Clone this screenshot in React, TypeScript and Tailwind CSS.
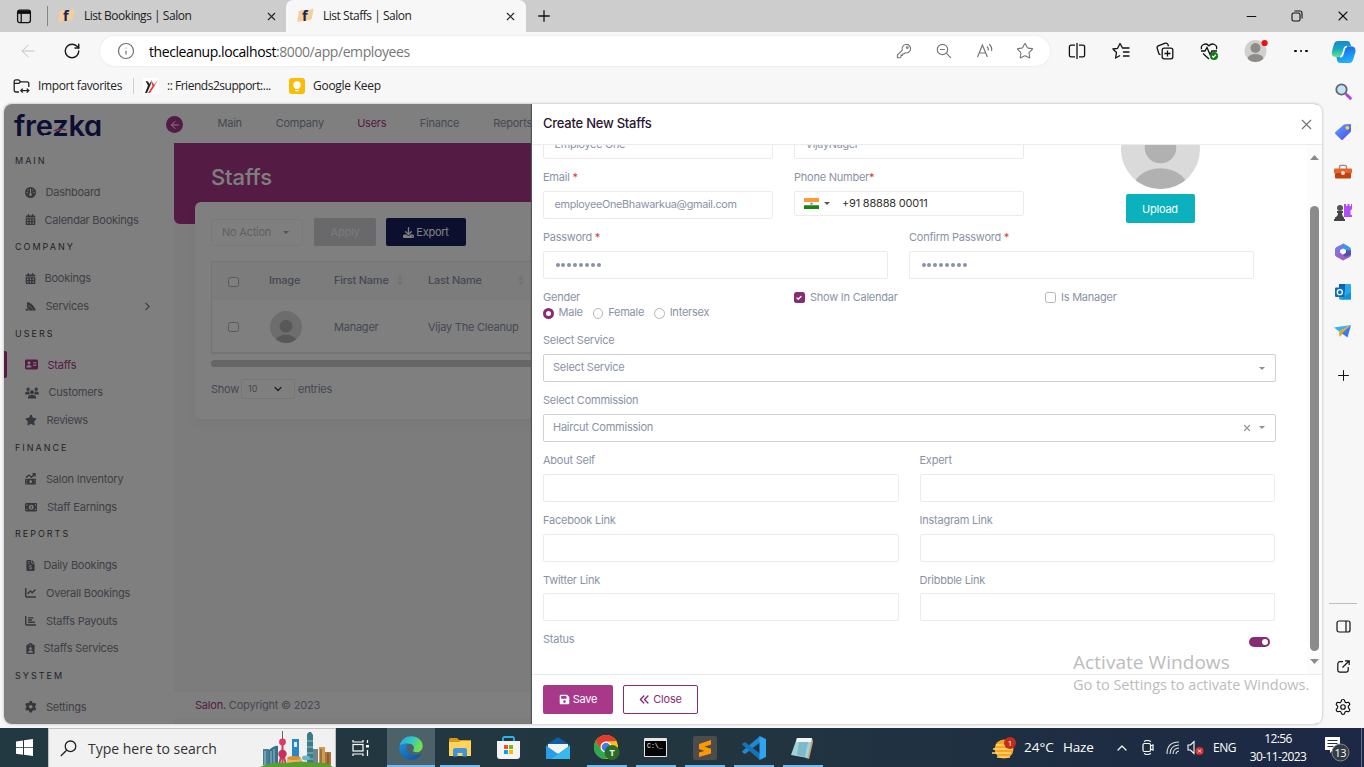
import React from "react";
import {
  FaGauge, FaCalendarDays, FaAddressCard, FaUsers, FaStar, FaMoneyBillTrendUp, FaMoneyBill1,
  FaFileInvoiceDollar, FaChartLine, FaChartBar, FaClipboardUser, FaGear, FaDownload,
  FaFloppyDisk, FaAnglesLeft,
} from "react-icons/fa6";
import {
  X, Plus, ArrowLeft, RotateCw, Info, Star, ChevronRight, ChevronDown, ChevronUp, Settings,
  SquareArrowOutUpRight, Minus, Check,
} from "lucide-react";

const ui = "font-['Open_Sans','Noto_Sans',sans-serif]";

/* ---------- browser chrome ---------- */

function Favicon() {
  return (
    <svg width="17" height="16" viewBox="0 0 17 16" className="shrink-0 overflow-visible">
      <path d="M1.500 3.500C6 0 9 5 16 .5c1 4-1 6-1 10-4 4-8 0-14 4C-.5 10 2.500 8 1.500 3.500Z" fill="#f5cf9b" />
      <text x="5" y="13" fontSize="14.500" fontWeight="700" fill="#1b1f5c" fontFamily="Open Sans, sans-serif">f</text>
    </svg>
  );
}

function TabBar() {
  return (
    <div className="flex h-8 shrink-0 bg-[#cdcdcd]">
      <div className="flex w-[47px] items-center justify-center">
        <svg width="16" height="15" viewBox="0 0 16 15" fill="none" stroke="#111" strokeWidth="1.3">
          <rect x="1.6" y="1.2" width="12.8" height="12.4" rx="2" />
          <path d="M2 3.2h12" strokeWidth="3.4" />
          <path d="M5.2 4v9" />
        </svg>
      </div>
      <div className="flex w-[239px] items-center pr-[8px]">
        <div className="mr-[10px] h-[20px] w-px bg-[#858585]" />
        <Favicon />
        <span className="ml-[9px] flex-1 text-[12px] tracking-[-0.47px] text-[#222]">List Bookings | Salon</span>
        <X size={13} strokeWidth={2} color="#222" />
      </div>
      <div className="flex w-[240px] items-center rounded-t-[7px] bg-[#f7f7f7] pl-[11px] pr-[9px]">
        <Favicon />
        <span className="ml-[9px] flex-1 text-[12px] tracking-[-0.47px] text-[#222]">List Staffs | Salon</span>
        <X size={13} strokeWidth={2} color="#222" />
      </div>
      <div className="flex w-[35px] items-center justify-center">
        <Plus size={18} strokeWidth={1.7} color="#111" />
      </div>
      <div className="flex-1" />
      <div className="flex w-[134px] items-center">
        <div className="flex w-[42px] justify-center"><Minus size={15} strokeWidth={1.6} color="#111" /></div>
        <div className="flex w-[50px] justify-center">
          <svg width="12" height="12" viewBox="0 0 12 12" fill="none" stroke="#111" strokeWidth="1.1">
            <rect x="1" y="3" width="8" height="8" rx="1.5" />
            <path d="M3.5 1H9a2 2 0 0 1 2 2v5.5" />
          </svg>
        </div>
        <div className="flex w-[42px] justify-center"><X size={16} strokeWidth={1.6} color="#111" /></div>
      </div>
    </div>
  );
}

function Toolbar() {
  return (
    <div className="flex h-[38px] shrink-0 items-center">
      <div className="flex w-[56px] justify-center"><ArrowLeft size={20} strokeWidth={1.2} color="#c3c3c3" /></div>
      <div className="flex w-[32px] justify-center"><RotateCw size={18} strokeWidth={1.9} color="#1b1b1b" /></div>
      <div className="ml-[12px] flex h-[30px] w-[950px] items-center rounded-full bg-white pl-[17px] shadow-[0_0_3px_rgba(0,0,0,0.08)]">
        <Info size={18} strokeWidth={1.6} color="#707070" />
        <span className="ml-[14px] text-[14px] tracking-[-0.42px] text-[#777]">
          <span className="text-black">thecleanup.localhost</span>:8000/app/employees
        </span>
        <div className="flex-1" />
        <svg width="16" height="16" viewBox="0 0 16 16" fill="none" stroke="#777" strokeWidth="1.1" className="mr-[24px]">
          <path d="M6.3 7.2A4.3 4.3 0 1 1 9 9.8L7.8 11H6.4v1.4H5v1.4l-1 1H1.4v-2.7Z" />
          <circle cx="11.3" cy="4.6" r="0.9" />
        </svg>
        <svg width="16" height="16" viewBox="0 0 16 16" fill="none" stroke="#777" strokeWidth="1.2" className="mr-[24px]">
          <circle cx="6.5" cy="6.5" r="5.2" /><path d="M4 6.5h5M10.4 10.4l4.5 4.5" />
        </svg>
        <svg width="18" height="16" viewBox="0 0 18 16" fill="none" stroke="#777" strokeWidth="1.2" className="mr-[22px]">
          <path d="M1.5 14 6.4 2l5 12M3.2 10h6.4M11 3.5q1.7 1.5 1.3 4M13.3 1.3q3.2 3 2.2 6.7" />
        </svg>
        <Star size={18} strokeWidth={1.5} color="#777" className="mr-[16px]" />
      </div>
      <div className="flex flex-1 items-center">
        <div className="flex w-[45px] justify-center pl-[8px]">
          <svg width="18" height="18" viewBox="0 0 18 18" fill="none" stroke="#111" strokeWidth="1.3">
            <path d="M7 3.2H3a1.6 1.6 0 0 0-1.6 1.6v8.4A1.6 1.6 0 0 0 3 14.8h4M11 3.2h4a1.6 1.6 0 0 1 1.6 1.6v8.4a1.6 1.6 0 0 1-1.6 1.6h-4M9 1v16" />
          </svg>
        </div>
        <div className="flex w-[45px] justify-center pl-[7px]">
          <svg width="18" height="18" viewBox="0 0 18 18" fill="none" stroke="#111" strokeWidth="1.3" strokeLinejoin="round">
            <path d="M10.5 6 8 1.5 5.6 6.3.9 7l3.6 3.5L3.6 16l4.5-2.5M10 6h7.5M11 10h6.5M11 14h6.5" />
          </svg>
        </div>
        <div className="flex w-[44px] justify-center pl-[6px]">
          <svg width="18" height="18" viewBox="0 0 18 18" fill="none" stroke="#111" strokeWidth="1.3">
            <rect x="6.2" y="6.2" width="10.6" height="10.6" rx="2" />
            <path d="M11.5 8.5v6M8.5 11.5h6M4.5 12.6 3 12 1.2 6.2a2 2 0 0 1 1-2.4L9.4 1.2a2 2 0 0 1 2.4 1l.7 2" />
          </svg>
        </div>
        <div className="flex w-[44px] justify-center pl-[6px]">
          <svg width="18" height="18" viewBox="0 0 18 18" fill="none" stroke="#111" strokeWidth="1.3">
            <path d="M1.6 7.2C0 3 6 0 9 3.8 12 0 18 3 16.4 7.2M1 9h4l2-3.5 3 7L12 9h5M3 11.5 9 17" />
            <circle cx="14" cy="14" r="4" fill="#107c10" stroke="none" />
            <path d="m12.200 14 1.300 1.300 2.400-2.500" stroke="#fff" />
          </svg>
        </div>
        <div className="flex w-[48px] justify-center pl-[8px]">
          <svg width="24" height="24" viewBox="0 0 24 24">
            <clipPath id="prof"><circle cx="11.5" cy="12" r="11" /></clipPath>
            <g clipPath="url(#prof)">
              <rect width="24" height="24" fill="#d2d0ce" />
              <circle cx="11.5" cy="9" r="5" fill="#8e8c8a" />
              <ellipse cx="11.5" cy="20" rx="8" ry="5" fill="#8e8c8a" />
            </g>
            <circle cx="20.6" cy="4" r="3.1" fill="#e11" />
          </svg>
        </div>
        <div className="flex w-[42px] items-center justify-center gap-[3px] pl-[8px]">
          <span className="size-[2.600px] rounded-full bg-black" />
          <span className="size-[2.600px] rounded-full bg-black" />
          <span className="size-[2.600px] rounded-full bg-black" />
        </div>
      </div>
    </div>
  );
}

function Favorites() {
  return (
    <div className="flex h-[34px] shrink-0 items-center pb-[2px] pl-[13px] text-[12px] text-[#222]">
      <svg width="17" height="16" viewBox="0 0 17 16" fill="none" stroke="#222" strokeWidth="1.3">
        <path d="M6 14H3a1.8 1.8 0 0 1-1.8-1.8V3.6A1.8 1.8 0 0 1 3 1.8h2.6l2 2H14a1.8 1.8 0 0 1 1.8 1.8V9M1.2 5.4h4.6l1.8-1.6M8 12.6h7.6M9.8 10.6 7.8 12.6l2 2M13.8 10.6l2 2-2 2" />
      </svg>
      <span className="ml-[8px] w-[95px] tracking-[-0.37px] whitespace-nowrap">Import favorites</span>
      <div className="h-[16px] w-px bg-[#cfcfcf]" />
      <svg width="16" height="16" viewBox="0 0 16 16" className="ml-[9px] bg-white">
        <path d="M2.500 3 5 3.500 6.500 6 9 1.500 7.500 7 4 15H2L5 7.500Z" fill="#222" />
        <path d="M8 4l2 .5L11 7l4-5.500L11.500 8 7 15H5L9.500 8Z" fill="#e33" />
      </svg>
      <span className="ml-[8px] w-[122px] tracking-[-0.48px] whitespace-nowrap">:: Friends2support:...</span>
      <div className="flex size-[16px] items-center justify-center rounded-[3px] bg-[#fbbc04]">
        <svg width="8" height="11" viewBox="0 0 8 11" fill="#fff"><circle cx="4" cy="4" r="3.7" /><path d="M2 6h4v2H2zM2.200 9h3.600v1.300H2.200z" /></svg>
      </div>
      <span className="ml-[8px] tracking-[-0.27px]">Google Keep</span>
    </div>
  );
}

function EdgeSidebar() {
  return (
    <div className="flex w-[42px] shrink-0 flex-col items-center">
      <div className="flex h-[39px] items-center">
        <svg width="25" height="24" viewBox="0 0 25 24">
          <defs>
            <linearGradient id="cpa" x1="0" y1="0" x2="0" y2="1"><stop offset="0" stopColor="#1688d8" /><stop offset="0.500" stopColor="#17a8c0" /><stop offset="1" stopColor="#6ee08a" /></linearGradient>
            <linearGradient id="cpb" x1="0" y1="0" x2="0.300" y2="1"><stop offset="0" stopColor="#1a5fd8" /><stop offset="1" stopColor="#1cb0ff" /></linearGradient>
          </defs>
          <path d="M7 1h9c2 0 3 1 3.300 3l1 2.500h-4c-1.300 0-2 .5-2.500 2L11.500 15c-.5 1.500-1 2-2.500 2H5C1 17 .5 14 1 11l2-7c.6-2 2-3 4-3Z" fill="url(#cpa)" />
          <path d="M18 23H9c-1.500 0-2.500-1-3-3l-.5-3H9c1.500 0 2-.5 2.500-2l2.300-6.500c.5-1.500 1.200-2 2.500-2H21c3 0 4 3 3.300 6L22 20c-.7 2-2 3-4 3Z" fill="url(#cpb)" />
          <path d="M16 6.500q-2 .3-2.500 2l-2 6.500q-.4 1.800-2.500 2" stroke="#eefcff" strokeWidth="1.700" fill="none" />
        </svg>
      </div>
      <div className="flex h-[40px] items-center">
        <svg width="17" height="17" viewBox="0 0 17 17"><circle cx="6.500" cy="6.500" r="5.200" fill="#bfe3fb" stroke="#666" strokeWidth="1.800" /><path d="m10.600 10.600 1.800 1.800" stroke="#666" strokeWidth="2" /><path d="m12 12 3.300 3.300" stroke="#b43df0" strokeWidth="3" strokeLinecap="round" /></svg>
      </div>
      <div className="flex h-[41px] items-center">
        <svg width="18" height="18" viewBox="0 0 18 18"><defs><linearGradient id="tg" x1="0" y1="0" x2="1" y2="1"><stop offset="0" stopColor="#5aa8ff" /><stop offset="1" stopColor="#4f46e5" /></linearGradient></defs><path d="M10 1.500 16 1q1 0 1 1v6.500L9 16.600q-1 1-2 0L1.400 11q-1-1 0-2Z" fill="url(#tg)" /><circle cx="13.300" cy="4.800" r="1.900" fill="#ffd43b" /></svg>
      </div>
      <div className="flex h-[40px] items-center">
        <svg width="20" height="16" viewBox="0 0 20 16"><path d="M6.500 5V3q0-1.700 1.700-1.700h3.600Q13.500 1.300 13.500 3v2" fill="none" stroke="#8b8b8b" strokeWidth="1.300" /><rect x="1" y="4.500" width="18" height="5" rx="1" fill="#e8622a" /><rect x="2" y="9" width="16" height="5.600" rx="1" fill="#c2410c" /><circle cx="10" cy="9" r="2" fill="#ddd" /></svg>
      </div>
      <div className="flex h-[40px] items-center">
        <svg width="20" height="20" viewBox="0 0 20 20"><path d="M11 2h2v2h1.500V2h2v2H18V2h1v5l-1.500 1.500V13H19v2h-8Z" fill="#b04df5" /><circle cx="7" cy="6" r="3" fill="#555" /><path d="M4 9h6v2H9q0 3 2 4.500V17h1v2H1v-2h1v-1.500Q5 14 5 11H4Z" fill="#444" /></svg>
      </div>
      <div className="flex h-[40px] items-center">
        <svg width="18" height="18" viewBox="0 0 18 18">
          <path d="M9.500.500 2.500 4Q1 5 1 6.500v6L6 10V7l5-2.500Z" fill="#7f74ea" />
          <path d="M9.500.500 15.500 4Q17 5 17 6.500V12l-5-2V7L7.500 4.500Z" fill="#3a97ea" />
          <path d="m17 9.500-.2 3q-.2 1-1.300 1.700L9 17.600l-7-4L1 12l5-2.500 3 2.200 3-2Z" fill="#9a62c4" />
          <path d="M17 8v4l-5.500 2-2.500-2 3-2V7Z" fill="#564fa8" />
        </svg>
      </div>
      <div className="flex h-[40px] items-center">
        <svg width="18" height="18" viewBox="0 0 18 18"><rect x="5" y="1" width="12" height="15.500" rx="1" fill="#28a8ea" /><path d="M5 1h6v8H5z" fill="#0a64ad" /><path d="M17 9v7.500H6Z" fill="#1490df" /><rect x="1" y="4.500" width="9.500" height="9.500" rx="1" fill="#0f6cbd" /><circle cx="5.800" cy="9.200" r="2.500" fill="none" stroke="#fff" strokeWidth="1.300" /></svg>
      </div>
      <div className="flex h-[40px] items-center">
        <svg width="18" height="16" viewBox="0 0 18 16"><path d="M17 1 0 3.500l5 4Z" fill="#35b4f2" /><path d="M17 1 5 7.500 5.500 13l3-3Z" fill="#f0a020" /><path d="M17 1 8 9.500l5.500 4Z" fill="#2f7df6" /></svg>
      </div>
      <div className="flex h-[46px] items-center"><Plus size={17} strokeWidth={1.4} color="#111" /></div>
      <div className="flex-1" />
      <div className="h-px w-[28px] bg-[#bdbdbd]" />
      <div className="flex h-[44px] items-center">
        <svg width="15" height="13" viewBox="0 0 15 13" fill="none" stroke="#111" strokeWidth="1.200"><rect x="1" y="1" width="13" height="11" rx="2" /><path d="M10 1v11" /></svg>
      </div>
      <div className="flex h-[37px] items-center">
        <svg width="13" height="13" viewBox="0 0 13 13" fill="none" stroke="#111" strokeWidth="1.200"><path d="M6 1.700H3A2.200 2.200 0 0 0 .8 4v6A2.200 2.200 0 0 0 3 12.200h6A2.200 2.200 0 0 0 11.200 10V7M8 .8h4.200V5M12 1 5.500 7.500" /></svg>
      </div>
      <div className="flex h-[43px] items-center"><Settings size={18} strokeWidth={1.600} color="#111" /></div>
    </div>
  );
}

/* ---------- salon application ---------- */

function WedgeIcon() {
  return (
    <svg width="11" height="10" viewBox="0 0 11 10" fill="currentColor">
      <path d="M2 1q5 .5 8.500 7v1.500H.5V8.200L2 7.500Z" />
      <path d="M3 4.500q3 .7 5 4M1 6.500q2.500.3 3.500 3" stroke="#fff" strokeWidth=".6" fill="none" />
    </svg>
  );
}

type Item = { icon: React.ReactNode; label: string; gap: string; active?: boolean; more?: boolean };
const sections: { title: string; items: Item[] }[] = [
  { title: "MAIN", items: [
    { icon: <FaGauge size={11} />, label: "Dashboard", gap: "ml-[10px]" },
    { icon: <FaCalendarDays size={11} />, label: "Calendar Bookings", gap: "ml-[9px]" }] },
  { title: "COMPANY", items: [
    { icon: <FaCalendarDays size={11} />, label: "Bookings", gap: "ml-[9px]" },
    { icon: <WedgeIcon />, label: "Services", gap: "ml-[10px]", more: true }] },
  { title: "USERS", items: [
    { icon: <FaAddressCard size={13} />, label: "Staffs", gap: "ml-[10px]", active: true },
    { icon: <FaUsers size={14} />, label: "Customers", gap: "ml-[10px]" },
    { icon: <FaStar size={12} />, label: "Reviews", gap: "ml-[10px]" }] },
  { title: "FINANCE", items: [
    { icon: <FaMoneyBillTrendUp size={11.5} />, label: "Salon Inventory", gap: "ml-[10px]" },
    { icon: <FaMoneyBill1 size={12.5} />, label: "Staff Earnings", gap: "ml-[10px]" }] },
  { title: "REPORTS", items: [
    { icon: <FaFileInvoiceDollar size={11} />, label: "Daily Bookings", gap: "ml-[8px]" },
    { icon: <FaChartLine size={11.5} />, label: "Overall Bookings", gap: "ml-[10px]" },
    { icon: <FaChartBar size={11.5} />, label: "Staffs Payouts", gap: "ml-[10px]" },
    { icon: <FaClipboardUser size={11} />, label: "Staffs Services", gap: "ml-[8px]" }] },
  { title: "SYSTEM", items: [{ icon: <FaGear size={11.5} />, label: "Settings", gap: "ml-[10px]" }] },
];

function Logo() {
  return (
    <svg width="89" height="26" viewBox="0 0 89 26" className="overflow-visible">
      <text x="0" y="22.500" className="font-['Inter',sans-serif] font-semibold [font-feature-settings:'cv11']" fontSize="28" textLength="88" lengthAdjust="spacingAndGlyphs" fill="#181f66">frezka</text>
      <path d="M30 22.500q5 1 9-2t7-4 7 2" fill="none" stroke="#fff" strokeWidth="1" />
      <path d="M40 18q5-3.500 12-1" fill="none" stroke="#d04a8b" strokeWidth="1.400" />
    </svg>
  );
}

function AppSidebar() {
  return (
    <div className="flex w-[170px] shrink-0 flex-col bg-white text-[11px] tracking-[-0.23px] text-[#7c828c]">
      <div className="h-[43.500px] shrink-0 pl-[10px] pt-[9px]"><Logo /></div>
      {sections.map((s) => (
        <div key={s.title} className="shrink-0">
          <div className="flex h-[30.850px] items-start pl-[11px] pt-[6.500px] text-[9px] leading-[13px] tracking-[2px] text-[#44474d]">{s.title}</div>
          {s.items.map((it) => (
            <div key={it.label} className={it.active ? "flex h-[27.750px] items-center text-[#a8388a]" : "flex h-[27.750px] items-center"}>
              <div className={it.active ? "h-[27px] w-[3px] rounded-r-[2px] bg-[#a8388a]" : "w-[3px]"} />
              <div className="ml-[17.500px] shrink-0 text-[#6a6e78]">
                <span className={it.active ? "text-[#a8388a]" : ""}>{it.icon}</span>
              </div>
              <span className={"flex-1 whitespace-nowrap " + it.gap}>{it.label}</span>
              {it.more && <ChevronRight size={13} strokeWidth={2} className="mr-[20px]" />}
            </div>
          ))}
        </div>
      ))}
    </div>
  );
}

function AvatarArt({ size }: { size: number }) {
  return (
    <svg width={size} height={size} viewBox="0 0 80 80" className="shrink-0 rounded-full bg-[#dadada]">
      <circle cx="40" cy="38" r="16" fill="#b1b1b1" />
      <ellipse cx="40" cy="82" rx="29" ry="23" fill="#b1b1b1" />
    </svg>
  );
}

function CheckBox({ on }: { on?: boolean }) {
  return on ? (
    <span className="flex size-[10.500px] shrink-0 items-center justify-center rounded-[2.500px] bg-[#872b73]"><Check size={6} strokeWidth={5} color="#fff" /></span>
  ) : (
    <span className="size-[10.500px] shrink-0 rounded-[2.500px] border border-[#b5b5b5] bg-white" />
  );
}

function SortMark() {
  return (
    <svg width="6" height="11" viewBox="0 0 6 11" fill="#e6e6ea"><path d="M3 0 5.500 4.700H.5ZM3 11 .5 6.300h5Z" /></svg>
  );
}

function Caret({ fill = "#8f8f8f" }: { fill?: string }) {
  return <svg width="6" height="3" viewBox="0 0 6 3" fill={fill}><path d="M0 0h6L3 3Z" /></svg>;
}

function StaffPage() {
  return (
    <div className="flex w-[358px] shrink-0 flex-col overflow-hidden bg-[#f8f8f8] text-[11px] tracking-[-0.23px] text-[#8a92a6]">
      <div className="flex h-[39px] shrink-0 items-center whitespace-nowrap bg-white">
        <span className="ml-[43.500px] w-[58.500px]">Main</span>
        <span className="w-[82px]">Company</span>
        <span className="w-[63px] text-[#a8388a]">Users</span>
        <span className="w-[74px]">Finance</span>
        <span>Reports</span>
      </div>
      <div className="h-[81px] shrink-0 rounded-bl-[6px] bg-[#a8388a] pl-[37px] pt-[19px] text-[22px] font-medium leading-[30px] tracking-[-0.1px] text-white">Staffs</div>
      <div className="-mt-[22px] ml-[21px] h-[217px] w-[360px] shrink-0 rounded-[6px] bg-white pl-[16px] pt-[16px] shadow-[0_4px_12px_rgba(0,0,0,0.04)]">
        <div className="flex h-[28px] items-center whitespace-nowrap">
          <div className="flex h-[27px] w-[92px] items-center rounded-[2px] border border-[#f2f2f2] pl-[10px] text-[#bcc0c8]">
            <span className="w-[61px]">No Action</span><Caret fill="#a8acb4" />
          </div>
          <div className="ml-[11px] flex h-[28px] w-[62px] items-center justify-center rounded-[2px] bg-[#d2d3d6] text-[#f4f4f4]">Apply</div>
          <div className="ml-[10px] flex h-[28px] w-[80px] items-center justify-center gap-[2px] rounded-[2px] bg-[#181f5c] text-white"><FaDownload size={11} />Export</div>
        </div>
        <div className="mt-[15px] h-[93px] border border-b-2 border-[#ebebeb] whitespace-nowrap">
          <div className="flex h-[38px] items-center bg-[#f8f8f8] pb-[1px] pl-[16px] font-medium">
            <span className="flex w-[41px] pt-[3px]"><CheckBox /></span>
            <span className="w-[65px]">Image</span>
            <span className="w-[63px]">First Name</span><SortMark />
            <span className="ml-[25px] w-[90px]">Last Name</span><SortMark />
          </div>
          <div className="flex h-[54px] items-center pl-[16px]">
            <span className="flex w-[42px]"><CheckBox /></span>
            <span className="flex w-[64px]"><AvatarArt size={32} /></span>
            <span className="w-[94px]">Manager</span>
            <span>Vijay The Cleanup</span>
          </div>
        </div>
        <div className="mt-[6px] h-[7px] rounded-l-full bg-[#cdcdcd]" />
        <div className="mt-[12px] flex h-[20px] items-center">
          <span className="w-[30px]">Show</span>
          <span className="flex h-[20px] w-[54px] items-center rounded-[2px] border border-[#ececec] pl-[6px] text-[9px] tracking-normal">
            <span className="w-[24px]">10</span><ChevronDown size={12} strokeWidth={2.600} color="#444" />
          </span>
          <span className="ml-[3px]">entries</span>
        </div>
      </div>
      <div className="flex-1" />
      <div className="mb-[6px] flex h-[26px] shrink-0 items-center bg-[#fefefe] pl-[21px] tracking-[-0.2px]">
        <span className="text-[#a8388a]">Salon.</span>&nbsp;Copyright © 2023
      </div>
    </div>
  );
}

function Label({ text, req }: { text: string; req?: string }) {
  return <div className="flex h-[27px] items-center whitespace-pre text-[11px]">{text}<span className="text-[#d0402f]">{req}</span></div>;
}

function Field({ label, req, value, select, clear }: { label: string; req?: string; value?: string; select?: boolean; clear?: boolean }) {
  return (
    <div className="mb-[4.850px]">
      <Label text={label} req={req} />
      <div className={select
        ? "flex h-[28px] items-center rounded-[2px] border border-[#cfd0d8] pl-[9px] pr-[10px]"
        : "flex h-[28px] items-center rounded-[2px] border border-[#ebebeb] pl-[10.500px] text-[10.800px] tracking-[-0.28px]"}>
        <span className={select ? "flex-1 pb-[2px]" : "flex-1 pb-[1px]"}>{value}</span>
        {clear && <X size={10} strokeWidth={3} color="#999" className="mr-[7px]" />}
        {select && <Caret />}
      </div>
    </div>
  );
}

function Dots() {
  return (
    <div className="flex h-[28px] items-center gap-[1.900px] rounded-[2px] border border-[#ebebeb] pl-[11.500px]">
      {[0, 1, 2, 3, 4, 5, 6, 7].map((i) => <span key={i} className="size-[4px] rounded-full bg-[#8a92a6]" />)}
    </div>
  );
}

function Radio({ label, on }: { label: string; on?: boolean }) {
  return (
    <span className="mr-[10px] flex items-center gap-[5px]">
      <span className={on ? "mt-[2px] size-[10.500px] rounded-full border-[3.200px] border-[#872b73] bg-white" : "mt-[2px] size-[10.500px] rounded-full border border-[#b5b5b5] bg-white"} />
      {label}
    </span>
  );
}

function Drawer() {
  return (
    <div className="relative flex w-[790px] shrink-0 flex-col bg-white text-[11px] tracking-[-0.24px] text-[#8a92a6] shadow-[-1px_0_1px_#555]">
      <div className="flex h-[41px] shrink-0 items-center justify-between border-b border-[#ebebeb] pl-[11px] pr-[7px] text-[13px] font-medium text-[#2b1530]">
        Create New Staffs
        <X size={17} strokeWidth={1.600} color="#707070" />
      </div>
      <div className="flex h-[529px] shrink-0 overflow-hidden">
        <div className="w-[733px] pl-[11px]">
          <div className="-mt-[40.700px] flex w-[732px] gap-[21px]">
            <div className="w-[230px]">
              <Field label="" value="Employee One" />
              <Field label="Email" req=" *" value="employeeOneBhawarkua@gmail.com" />
            </div>
            <div className="w-[230px]">
              <Field label="" value="VijayNager" />
              <Label text="Phone Number" req="*" />
              <div className="flex h-[25px] items-center rounded-[2px] border border-[#ebebeb] pl-[9px] text-[#333]">
                <svg width="15" height="11" viewBox="0 0 15 11"><path fill="#ff9933" d="M0 0h15v4H0z" /><path fill="#fff" d="M0 4h15v3H0z" /><path fill="#138808" d="M0 7.300h15V11H0z" /><circle cx="7.500" cy="5.600" r="1.200" fill="#7a86c8" /></svg>
                <span className="ml-[5px] mr-[12px]"><svg width="6" height="3" viewBox="0 0 6 3" fill="#555"><path d="M0 0h6L3 3Z" /></svg></span>
                <span className="tracking-[-0.2px]">+91 88888 00011</span>
              </div>
            </div>
            <div className="flex w-[230px] flex-col items-center pt-[6px]">
              <AvatarArt size={79} />
              <div className="mt-[5px] flex h-[29px] w-[69px] items-center justify-center rounded-[2px] bg-[#0bb2bd] text-white">Upload</div>
            </div>
          </div>
          <div className="flex gap-[21px]">
            <div className="mb-[5px] w-[345px]"><Label text="Password" req=" *" /><Dots /></div>
            <div className="w-[345px]"><Label text="Confirm Password" req=" *" /><Dots /></div>
          </div>
          <div className="flex h-[43px] w-[732px] gap-[21px] pt-[6px]">
            <div className="w-[230px] leading-[15px]">
              <div>Gender</div>
              <div className="flex"><Radio label="Male" on /><Radio label="Female" /><Radio label="Intersex" /></div>
            </div>
            <div className="flex h-[15px] w-[230px] items-center gap-[5.500px]"><CheckBox on />Show In Calendar</div>
            <div className="flex h-[15px] w-[230px] items-center gap-[5.500px]"><CheckBox />Is Manager</div>
          </div>
          <div className="w-[733px]">
            <Field label="Select Service" value="Select Service" select />
            <Field label="Select Commission" value="Haircut Commission" select clear />
            <div className="grid w-[732px] grid-cols-2 gap-x-[21px]">
              <Field label="About Self" /><Field label="Expert" />
              <Field label="Facebook Link" /><Field label="Instagram Link" />
              <Field label="Twitter Link" /><Field label="Dribbble Link" />
            </div>
          </div>
          <div className="flex h-[26px] w-[727px] items-center justify-between">
            Status
            <span className="mt-[5px] flex h-[10px] w-[21px] items-center justify-end rounded-full bg-[#872b73] pr-[2px]"><span className="size-[6px] rounded-full bg-white" /></span>
          </div>
        </div>
        <div className="flex-1" />
        <div className="flex w-[15px] flex-col items-center bg-[#fcfcfc] pt-[10px]">
          <svg width="9" height="5" viewBox="0 0 9 5" fill="#8b8b8b"><path d="M0 5h9L4.500 0Z" /></svg>
          <div className="mt-[46px] h-[445px] w-[9px] rounded-full bg-[#8b8b8b]" />
          <svg width="9" height="5" viewBox="0 0 9 5" fill="#8b8b8b" className="mt-[8px]"><path d="M0 0h9L4.500 5Z" /></svg>
        </div>
      </div>
      <div className="flex flex-1 items-start gap-[10px] border-t border-[#ebebeb] pl-[11px] pt-[10px]">
        <div className="flex h-[29px] w-[70px] items-center justify-center gap-[3px] rounded-[2px] bg-[#a8388a] text-white"><FaFloppyDisk size={11} />Save</div>
        <div className="flex h-[29px] w-[75px] items-center justify-center gap-[3px] rounded-[2px] border border-[#872b73] text-[#872b73]"><FaAnglesLeft size={11} />Close</div>
      </div>
      <div className={"pointer-events-none absolute left-[541px] top-[546px] whitespace-nowrap text-[#bcbcbc] " + ui}>
        <div className="text-[19px] leading-[25px] tracking-[0.05px]">Activate Windows</div>
        <div className="text-[14.500px] leading-[19px] tracking-[-0.04px]">Go to Settings to activate Windows.</div>
      </div>
    </div>
  );
}

function SalonApp() {
  return (
    <div className="ml-[4px] flex h-[620px] w-[1318px] shrink-0 overflow-hidden rounded-[8px] font-['Inter',sans-serif] shadow-[0_0_3px_rgba(0,0,0,0.3)]">
      <div className="relative flex w-[528px] shrink-0">
        <AppSidebar />
        <StaffPage />
        <div className="absolute left-[162px] top-[12px] flex size-[17px] items-center justify-center rounded-full bg-[#a8388a]">
          <ArrowLeft size={12} strokeWidth={2} color="#fff" />
        </div>
        <div className="absolute inset-0 bg-black/50" />
      </div>
      <Drawer />
    </div>
  );
}

/* ---------- taskbar ---------- */

function Skyline() {
  return (
    <svg width="74" height="38" viewBox="0 0 74 38">
      <path d="M3 20h6v16H3z" fill="#4a7c96" /><path d="M9 21q6-5 9-4v19H9z" fill="#39708c" /><path d="M11 36V22M14 36V20M5 36V22" stroke="#9cc4d4" />
      <path d="M32 10h7v26h-7z" fill="#2d86c4" /><path d="M34 13h3v5h-3z" fill="#d8eefc" />
      <path d="m47 5 2-2h2l2 3v30h-6z" fill="#3d7b85" /><path d="M47 12h6M47 18h6M47 24h6M47 30h6" stroke="#8fc3c7" />
      <path d="M53 20h5v16h-5z" fill="#6a8790" /><path d="M59 18h6v18h-6z" fill="#d29a4c" /><path d="M65 23h6v13h-6z" fill="#a8763e" /><path d="M61 36V20M68 36V24" stroke="#6f4a28" />
      <path d="M22.500 2v10" stroke="#666" /><path d="M22.500 12v24M19 36l3-12M26 36l-3-12" stroke="#c2415c" strokeWidth="2" />
      <circle cx="22.500" cy="13" r="3.400" fill="#d93b6b" /><circle cx="22.500" cy="25" r="4.200" fill="#c72f5e" />
      <path d="M27 30h15v6H27z" fill="#e8b45a" /><ellipse cx="34" cy="29" rx="7" ry="2" fill="#d98f3a" /><ellipse cx="46" cy="29" rx="4" ry="2.400" fill="#69b3d0" />
      <path d="M0 38q12-6 26-4 18-3 28 0 12-2 19 4Z" fill="#5a9e32" />
    </svg>
  );
}

function TaskIcon({ children, open, active }: { children: React.ReactNode; open?: boolean; active?: boolean }) {
  return (
    <div className={active ? "flex w-[48px] flex-col items-center bg-[#4d6168]" : "flex w-[49px] flex-col items-center"}>
      <div className="flex flex-1 items-center justify-center pt-[2px]">{children}</div>
      <div className={active ? "h-[2px] w-full bg-[#76b9ed]" : open ? "h-[2px] w-[40px] bg-[#76b9ed]" : "h-[2px]"} />
    </div>
  );
}

function Taskbar() {
  return (
    <div className={"flex h-[39px] shrink-0 bg-linear-to-r from-[#223942] via-[#22363f] to-[#1c2745] " + ui}>
      <div className="flex w-[48px] items-center justify-center">
        <svg width="17" height="17" viewBox="0 0 17 17" fill="#fff"><path d="M0 2.400 7 1.400v6.800H0zM8 1.200 17 0v8.200H8zM0 9h7v6.700l-7-1zM8 9h9v8l-9-1.200z" /></svg>
      </div>
      <div className="flex w-[288px] items-center border border-b-0 border-[#c0c0c0] bg-[#f1f1f1] pl-[11px]">
        <svg width="17" height="17" viewBox="0 0 17 17" fill="none" stroke="#222" strokeWidth="1.300"><circle cx="10.500" cy="6.300" r="5.300" /><path d="M6.600 10.200.8 16" /></svg>
        <span className="ml-[11px] w-[172px] whitespace-nowrap text-[14px] tracking-[0px] text-[#333]">Type here to search</span>
        <Skyline />
      </div>
      <div className="flex w-[51px] items-center justify-center pr-[3px]">
        <svg width="17" height="16" viewBox="0 0 17 16" fill="none" stroke="#fff" strokeWidth="1.200"><path d="M1 0v2h10V0M1 16v-2h10v2M15.500 0v3M15.500 10v6" /><rect x="1" y="4.500" width="10" height="6.500" /><path d="M14 5h3v2.500h-3z" fill="#fff" stroke="none" /></svg>
      </div>
      <TaskIcon active>
        <svg width="24" height="24" viewBox="0 0 24 24">
          <defs><linearGradient id="e1" x1="0" y1="0" x2="1" y2="0.400"><stop offset="0" stopColor="#2aa8ee" /><stop offset="0.550" stopColor="#31c9c0" /><stop offset="1" stopColor="#74e04c" /></linearGradient><linearGradient id="e2" x1="0" y1="0" x2="1" y2="1"><stop offset="0" stopColor="#1b8fe0" /><stop offset="1" stopColor="#0d4d9c" /></linearGradient></defs>
          <path d="M.5 10C2 3.500 7 .3 12.500.3 19 .3 23.700 5 23.700 10c0 4-3 6.300-6 6.300-2.600 0-4-1-3.500-2 2-3 0-6.500-4-6.500C6 7.500 2 8 .5 10Z" fill="url(#e1)" />
          <path d="M.3 11C2 8 6 7 9 7.700c-3 1.500-2.500 12 7.500 11.300 2.500 0 4.500-1 5.200-1.400.5-.2.900.3.500.8C20 21.500 16.500 23.700 12 23.700 5 23.700 0 17.500.3 11Z" fill="url(#e2)" />
        </svg>
      </TaskIcon>
      <TaskIcon open>
        <svg width="22" height="19" viewBox="0 0 22 19"><path d="M0 1.500Q0 0 1.500 0H8l2 2h12v6H0z" fill="#d79a18" /><path d="M0 4h10l2-1h10v15H0z" fill="#ffd35c" /><path d="M4 18.500v-6.500q0-2 2-2h10q2 0 2 2v6.500h-4.500V15h-5v3.500z" fill="#3f94d8" /></svg>
      </TaskIcon>
      <TaskIcon>
        <svg width="23" height="23" viewBox="0 0 23 23"><path d="M6 7V2.600Q6 1 7.600 1h7.800Q17 1 17 2.600V7" fill="none" stroke="#2bb5ee" strokeWidth="1.800" /><path d="M0 5h23v15q0 3-3 3H3q-3 0-3-3z" fill="#f4f4f4" /><path fill="#f25022" d="M7 9h4v4H7z" /><path fill="#7fba00" d="M12 9h4v4h-4z" /><path fill="#00a4ef" d="M7 14h4v4H7z" /><path fill="#ffb900" d="M12 14h4v4h-4z" /></svg>
      </TaskIcon>
      <TaskIcon>
        <svg width="24" height="22" viewBox="0 0 24 22"><path d="M12 0 24 8v2H0V8Z" fill="#0f5ca8" /><path d="M2 7h20v6l-10 4L2 13Z" fill="#f3f3f3" /><path d="M0 8.500 12 17 24 8.500V22H0Z" fill="#2b9ce8" /><path d="M24 8.500V22H5Z" fill="#37b8f0" /></svg>
      </TaskIcon>
      <TaskIcon open>
        <svg width="26" height="25" viewBox="0 0 26 25"><circle cx="12" cy="12" r="12" fill="#fbc116" /><path d="M1.600 6A12 12 0 0 1 22.400 6L12 6.500 7 15Z" fill="#e33b2e" /><path d="M1.600 6A12 12 0 0 0 12 24l5-9H7Z" fill="#2da94f" /><circle cx="12" cy="12" r="5.500" fill="#fff" /><circle cx="12" cy="12" r="4.300" fill="#3f7fe8" /><circle cx="18" cy="17.500" r="7.500" fill="#2f6b25" /><text x="18" y="21" fontSize="9" fontWeight="700" textAnchor="middle" fill="#dfe" fontFamily="Open Sans">T</text></svg>
      </TaskIcon>
      <TaskIcon open>
        <svg width="23" height="19" viewBox="0 0 23 19"><rect width="23" height="19" rx="1" fill="#e6e6e6" /><path fill="#050505" d="M1 3h21v15H1z" /><text x="3" y="9.500" fontSize="6.500" fill="#fff" fontFamily="Liberation Mono">C:\_</text></svg>
      </TaskIcon>
      <TaskIcon open>
        <svg width="24" height="24" viewBox="0 0 24 24"><rect width="24" height="24" rx="2" fill="#4c4c4c" /><path d="M18 4v4.600L6 12.500V8ZM6 9l12 3.800v4.400L6 13ZM18 13v4.500L6 21v-4.500Z" fill="#ff9800" /></svg>
      </TaskIcon>
      <TaskIcon open>
        <svg width="24" height="24" viewBox="0 0 24 24"><path d="M18 0v6.500L3 18l-2.500-1.500q-.8-.6 0-1.400Z" fill="#1f8ad2" /><path d="M18 24v-6.500L3 6 .5 7.500q-.8.600 0 1.400Z" fill="#1673b8" /><path d="M17.500 0 24 3v18l-6.500 3Z" fill="#2fa4f0" /></svg>
      </TaskIcon>
      <TaskIcon open>
        <svg width="23" height="22" viewBox="0 0 23 22"><path d="M7 2h14.500L22 5l-4 17-3-1Z" fill="#c9a772" /><path d="M6 1h15l-4.500 20L0 18Z" fill="#9fd4df" /><path d="M6 1h15l-1 4H5Z" fill="#eef6f7" /><path d="m8 5 9 0-3 15-8-2Z" fill="#67a9ba" opacity=".6" /></svg>
      </TaskIcon>
      <div className="flex-1" />
      <div className="flex items-center whitespace-nowrap text-[13.500px] text-white">
        <svg width="25" height="22" viewBox="0 0 25 22"><circle cx="12" cy="12" r="9.500" fill="#f7a521" /><path d="M4 8h17M1 12h20M0 16h19M5 20h13" stroke="#ffd97a" strokeWidth="1.700" /><circle cx="18" cy="6" r="6" fill="#c42b1c" /><text x="18" y="9" fontSize="8" textAnchor="middle" fill="#fff" fontFamily="Open Sans">1</text></svg>
        <span className="ml-[7px] w-[39px] tracking-[0px]">24°C</span>
        <span className="w-[51px] tracking-[-0.2px]">Haze</span>
        <ChevronUp size={16} strokeWidth={1.800} />
        <svg width="12" height="17" viewBox="0 0 12 17" fill="none" stroke="#fff" strokeWidth="1.200" className="ml-[12px]"><rect x="1" y="4.500" width="7.500" height="8" rx="1.500" /><path d="m8.500 7 2.500-1v5l-2.500-1M2 2.500q3-2 7 0M2 14.500q3 2 7 0" /></svg>
        <svg width="14" height="14" viewBox="0 0 14 14" fill="none" stroke="#ddd" strokeWidth="1.100" className="ml-[12px]"><path d="M1 13Q1 1 13 1M4 13q0-8.500 9-9M7 13q0-5.500 6-6M10 13q0-2.500 3-3" /></svg>
        <svg width="17" height="16" viewBox="0 0 17 16" className="ml-[7px]"><path d="M1 5h2.500L7 1.500v12L3.500 10H1Z" fill="none" stroke="#fff" strokeWidth="1.100" /><circle cx="12.500" cy="11" r="4" fill="#d8302c" /><path d="m11 9.500 3 3M14 9.500l-3 3" stroke="#fff" /></svg>
        <span className="ml-[9px] w-[33px] text-[12px] tracking-[-0.5px]">ENG</span>
        <div className="w-[64px] text-center text-[12px] leading-[18px] tracking-[-0.6px]">
          <div>12:56</div><div>30-11-2023</div>
        </div>
        <svg width="28" height="26" viewBox="0 0 28 26" className="ml-[12px] mt-[2px]"><path d="M3 1h15v13h-7l-3 3v-3H3Z" fill="#fff" /><path d="M5.500 4.500h10M5.500 7.500h10M5.500 10.500h6" stroke="#24304a" /><circle cx="18.500" cy="16.500" r="8.500" fill="#333b45" stroke="#888" /><text x="18.300" y="20.500" fontSize="11" textAnchor="middle" fill="#fff" fontFamily="Open Sans" letterSpacing="-.5">13</text></svg>
        <div className="ml-[11px] h-[39px] w-px bg-[#66708a]" />
        <div className="w-[2px]" />
      </div>
    </div>
  );
}

export default function App() {
  return (
    <div className={"flex h-[767px] w-[1364px] flex-col overflow-hidden bg-[#f7f7f7] " + ui}>
      <TabBar />
      <div className="flex min-h-0 flex-1">
        <div className="flex w-[1322px] shrink-0 flex-col">
          <Toolbar />
          <Favorites />
          <SalonApp />
        </div>
        <EdgeSidebar />
      </div>
      <Taskbar />
    </div>
  );
}
